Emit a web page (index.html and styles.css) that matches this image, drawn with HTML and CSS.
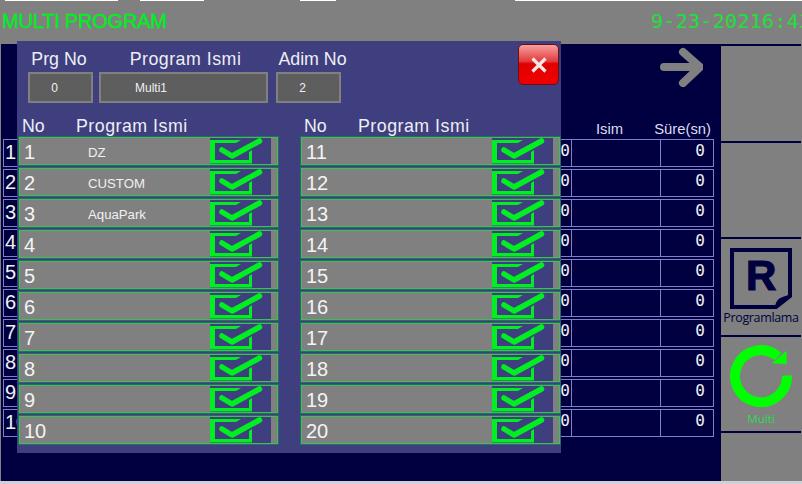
FILE: index.html
```html
<!DOCTYPE html>
<html lang="tr">
<head>
<meta charset="utf-8">
<title>Multi Program</title>
<link rel="stylesheet" href="styles.css">
</head>
<body>
<div class="screen">
  <header class="topbar">
    <span class="title">MULTI PROGRAM</span>
    <span class="clock">9-23-20216:43</span>
  </header>
  <div class="content">
    <main class="main">
      <div class="arrow-row">
        <svg class="arrow" viewBox="0 0 50 40" width="50" height="40"><path d="M11 20H46M30 5L47 20L30 36" fill="none" stroke="#808080" stroke-width="8" stroke-linecap="round" stroke-linejoin="round"/></svg>
      </div>
      <div class="table-head"><span class="th-name">Isim</span><span class="th-time">Süre(sn)</span></div>
      <div class="table" id="table"></div>
    </main>
    <aside class="sidebar">
      <div class="side-cell side-a"></div>
      <div class="side-cell side-b"></div>
      <div class="side-cell side-c">
        <svg class="r-icon" viewBox="0 0 62 62" width="62" height="62">
          <path d="M2 2H60V48L46 59H2Z" fill="none" stroke="#000040" stroke-width="4"/>
          <path d="M46 59C47 52 50 50 60 48Z" fill="#000040" stroke="#000040" stroke-width="2"/>
          <text x="16" y="42" class="r-letter">R</text>
        </svg>
        <span class="side-label">Programlama</span>
      </div>
      <div class="side-cell side-d">
        <svg class="cycle" viewBox="0 0 62 62" width="62" height="62">
          <path d="M57 30.5A26 26 0 1 1 48 11.5" fill="none" stroke="#00ff00" stroke-width="10"/>
          <path d="M56.6 5.7V19L42 18.3Z" fill="#00ff00"/>
        </svg>
        <span class="side-multi">Multi</span>
      </div>
      <div class="side-cell side-e"></div>
    </aside>
  </div>
  <div class="bottom-strip"></div>

  <section class="modal">
    <div class="modal-top">
      <div class="field field-no"><label>Prg No</label><div class="box">0</div></div>
      <div class="field field-name"><label>Program Ismi</label><div class="box box-name">Multi1</div></div>
      <div class="field field-step"><label>Adim No</label><div class="box">2</div></div>
    </div>
    <button class="close" aria-label="Kapat">
      <svg viewBox="0 0 20 20" width="20" height="20"><path d="M3.5 3.5L16.5 16.5M16.5 3.5L3.5 16.5" stroke="#f4e6e6" stroke-width="3.2"/></svg>
    </button>
    <div class="lists" id="lists"></div>
  </section>
</div>
<script src="app.js"></script>
</body>
</html>
```
FILE: styles.css
```css
* { box-sizing: border-box; }
html, body { margin: 0; padding: 0; }
body { width: 802px; height: 484px; overflow: hidden; font-family: "Liberation Sans", Arial, sans-serif; }
.screen { position: relative; width: 802px; height: 484px; display: flex; flex-direction: column; background: #808080; }

.topbar {
  height: 44px; flex: none; display: flex; align-items: flex-start; justify-content: space-between;
  padding: 10px 0 0 2px; overflow: hidden; white-space: nowrap; background-color: #808080;
  background-image: linear-gradient(90deg, transparent 5px, #fff 5px, #fff 118px, transparent 118px, transparent 140px, #fff 140px, #fff 204px, transparent 204px, transparent 300px, #fff 300px, #fff 336px, transparent 336px, transparent 515px, #fff 515px);
  background-size: 100% 1px; background-repeat: no-repeat;
}
.title { font-size: 20px; line-height: 23px; color: #00ee22; -webkit-text-stroke: .4px #00ee22; letter-spacing: -.2px; }
.clock { font-family: "DejaVu Sans Mono", monospace; font-size: 20px; line-height: 23px; color: #1fe03a; width: 151px; letter-spacing: .3px; }

.content { flex: 1; display: flex; min-height: 0; padding-left: 1px; }
.main { width: 720px; flex: none; background: #000040; display: flex; flex-direction: column; }
.arrow-row { height: 77px; flex: none; display: flex; justify-content: flex-end; padding: 3px 18px 0 0; }
.arrow { display: block; }
.table-head { height: 18px; flex: none; display: grid; grid-template-columns: 570px 90px 53px; font-size: 14.8px; line-height: 16px; color: #dcdcf0; }
.th-name { grid-column: 2; text-align: center; padding-right: 13px; }
.th-time { grid-column: 3; text-align: right; white-space: nowrap; margin-right: 3px; margin-left: -20px; }
.table { display: flex; flex-direction: column; gap: 2px; padding-left: 2px; }
.trow { display: grid; grid-template-columns: 284px 283px 90px 52px; height: 28px; width: 711px; border: 1px solid #8080c8; color: #f0f0f0; }
.t-idx { font-size: 20px; line-height: 24px; padding-left: 1px; }
.t-val { font-family: "DejaVu Sans Mono", monospace; font-size: 16px; line-height: 22px; text-align: right; padding-right: 1px; }
.t-name { border-left: 1px solid #8080c8; border-right: 1px solid #8080c8; }
.t-time { font-family: "DejaVu Sans Mono", monospace; font-size: 16px; line-height: 22px; text-align: right; padding-right: 8px; }

.sidebar { flex: 1; display: flex; flex-direction: column; }
.side-cell { border-top: 2px solid #000040; background: #808080; display: flex; flex-direction: column; align-items: center; margin-right: 1px; }
.side-a { height: 97px; }
.side-b { height: 96px; }
.side-c { height: 98px; padding-top: 9px; }
.side-d { height: 96px; padding-top: 8px; }
.side-e { flex: 1; }
.r-icon, .cycle { display: block; }
.r-letter { font-family: "Liberation Sans", sans-serif; font-weight: 700; font-size: 42px; fill: #000040; stroke: #000040; stroke-width: 1.2px; }
.side-label { font-size: 12.5px; line-height: 14px; color: #000040; margin-top: 1px; font-family: "Open Sans", sans-serif; letter-spacing: -.35px; white-space: nowrap; }
.side-multi { font-size: 11.5px; line-height: 14px; color: #2fdd50; margin-top: 5px; font-family: "Open Sans", sans-serif; }

.bottom-strip { height: 3px; flex: none; background: #cfcfd8; }

.modal { position: absolute; left: 17px; top: 41px; width: 544px; height: 412px; background: #3f3f7f; color: #f0f0f0; padding: 0 0 0 2px; }
.modal-top { display: flex; height: 62px; padding: 8px 0 0 9px; }
.field { display: flex; flex-direction: column; }
.field label { font-size: 17.8px; line-height: 21px; height: 23px; white-space: nowrap; text-align: center; color: #eeeef4; }
.field-no { width: 65px; }
.field-no label { padding-right: 3px; }
.field-name { width: 169px; margin-left: 6px; }
.field-name label { padding-left: 4px; letter-spacing: .5px; }
.field-step { width: 65px; margin-left: 8px; }
.field-step label { margin: 0 -6px 0 2px; }
.box { height: 31px; background: #5e5e5e; border: 2px solid #808080; font-size: 12px; line-height: 29px; color: #f0f0f0; text-align: center; padding-right: 12px; }
.box-name { text-align: left; padding-left: 34px; }
.close { position: absolute; left: 501px; top: 3px; width: 41px; height: 41px; padding: 0; border: 1px solid #6b1010; border-radius: 5px; display: flex; align-items: center; justify-content: center; background: linear-gradient(#f5a0a0 0, #e43a3a 42%, #e00000 48%, #f00000 100%); }
.close svg { display: block; }

.lists { display: grid; grid-template-columns: 259px 259px; column-gap: 23px; padding-top: 13px; }
.list { display: flex; flex-direction: column; gap: 3px; }
.list-head { display: flex; font-size: 17.8px; line-height: 21px; height: 19px; padding-left: 3px; color: #eeeef4; margin-bottom: -1px; white-space: nowrap; }
.list-head span:first-child { width: 54px; }
.list-head span:last-child { letter-spacing: .5px; }
.lrow { height: 28px; display: flex; background: #808080; border: 1px solid #3fbf55; box-shadow: 0 0 0 1px rgba(38, 120, 100, .75); }
.l-no { width: 68px; flex: none; font-size: 20px; line-height: 28px; padding-left: 4px; color: #f4f4f4; }
.l-name { flex: 1; font-size: 13.2px; line-height: 29px; color: #f0f0f0; white-space: nowrap; }
.l-check { flex: none; display: block; margin-right: 6px; background: #3f3f7f; }
```
FILE: app.js
```js
(function () {
  var table = document.getElementById('table');
  var html = '';
  for (var i = 1; i <= 10; i++) {
    html += '<div class="trow"><div class="t-idx">' + i + '</div><div class="t-val">0</div><div class="t-name"></div><div class="t-time">0</div></div>';
  }
  table.innerHTML = html;

  var names = { 1: 'DZ', 2: 'CUSTOM', 3: 'AquaPark' };
  var check = '<svg class="l-check" viewBox="0 0 61 26" width="61" height="26">' +
    '<path d="M0 2H31L26 5H5V22H39V14L42 12V25.5H0Z" fill="#00ee22"/>' +
    '<path d="M12 12L22 18L49.5 3" fill="none" stroke="#00ee22" stroke-width="5.5" stroke-linecap="round" stroke-linejoin="round"/></svg>';

  function list(from) {
    var out = '<div class="list"><div class="list-head"><span>No</span><span>Program Ismi</span></div>';
    for (var n = from; n < from + 10; n++) {
      out += '<div class="lrow"><div class="l-no">' + n + '</div><div class="l-name">' + (names[n] || '') + '</div>' + check + '</div>';
    }
    return out + '</div>';
  }
  document.getElementById('lists').innerHTML = list(1) + list(11);
})();
```
